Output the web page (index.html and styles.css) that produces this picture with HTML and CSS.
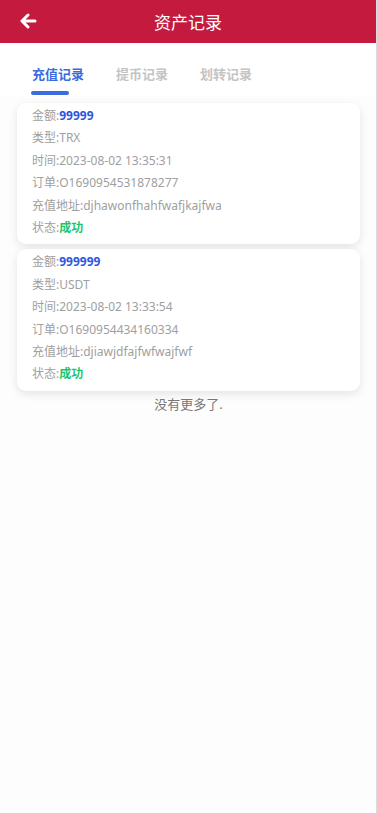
FILE: index.html
```html
<!DOCTYPE html>
<html lang="zh-CN">
<head>
    <meta charset="UTF-8">
    <meta name="viewport" content="width=device-width, initial-scale=1.0">
    <title>资产记录</title>
    <link rel="stylesheet" href="styles.css">
</head>
<body>
    <div class="page">
        <div class="header">
            <span class="back">
                <svg width="18" height="16" viewBox="0 0 18 16">
                    <path d="M9 2 L3 8 L9 14 M3 8 H16" fill="none" stroke="#fff" stroke-width="3" stroke-linecap="round" stroke-linejoin="round"/>
                </svg>
            </span>
            <div class="title">资产记录</div>
        </div>

        <div class="tabs">
            <div class="tab active">充值记录</div>
            <div class="tab">提币记录</div>
            <div class="tab">划转记录</div>
        </div>

        <div class="list">
            <div class="card">
                <div class="row">金额:<span class="amount">99999</span></div>
                <div class="row">类型:TRX</div>
                <div class="row">时间:2023-08-02 13:35:31</div>
                <div class="row">订单:O1690954531878277</div>
                <div class="row">充值地址:djhawonfhahfwafjkajfwa</div>
                <div class="row">状态:<span class="ok">成功</span></div>
            </div>
            <div class="card">
                <div class="row">金额:<span class="amount">999999</span></div>
                <div class="row">类型:USDT</div>
                <div class="row">时间:2023-08-02 13:33:54</div>
                <div class="row">订单:O1690954434160334</div>
                <div class="row">充值地址:djiawjdfajfwfwajfwf</div>
                <div class="row">状态:<span class="ok">成功</span></div>
            </div>
            <div class="no-more">没有更多了.</div>
        </div>
    </div>
</body>
</html>
```

FILE: styles.css
```css
body {
    margin: 0;
    font-family: "Noto Sans", "Noto Sans CJK SC", sans-serif;
    background: #fff;
}

.page {
    width: 376px;
    min-height: 813px;
    border-right: 1px solid #dcdcdc;
    background: #fdfdfd;
}

.header {
    height: 43px;
    background-color: #c41a3d;
    display: flex;
    align-items: center;
    position: relative;
}

.back {
    position: absolute;
    left: 19px;
    top: 13px;
    display: flex;
}

.title {
    flex: 1;
    text-align: center;
    color: #fff;
    font-size: 17px;
}

.tabs {
    display: flex;
    gap: 32px;
    padding: 20px 0 0 32px;
    background: #fff;
    height: 33px;
}

.tab {
    font-size: 13px;
    font-weight: bold;
    color: #c4c4c4;
    line-height: 22px;
    position: relative;
}

.tab.active {
    color: #3b6bde;
}

.tab.active::after {
    content: "";
    position: absolute;
    left: -1px;
    top: 28px;
    width: 38px;
    height: 4px;
    border-radius: 2px;
    background: #3b6bde;
}

.list {
    padding: 7px 16px 0 17px;
}

.card {
    background: #fff;
    border-radius: 9px;
    box-shadow: 0 3px 10px rgba(0, 0, 0, 0.1);
    padding: 2px 15px 5px;
    margin-bottom: 5px;
}

.row {
    font-size: 12px;
    line-height: 22.4px;
    color: #a0a0a0;
}

.amount {
    color: #2f56e0;
    font-weight: bold;
}

.ok {
    color: #1fc36e;
    font-weight: bold;
}

.no-more {
    text-align: center;
    font-size: 13px;
    line-height: 16px;
    color: #777;
}
```
